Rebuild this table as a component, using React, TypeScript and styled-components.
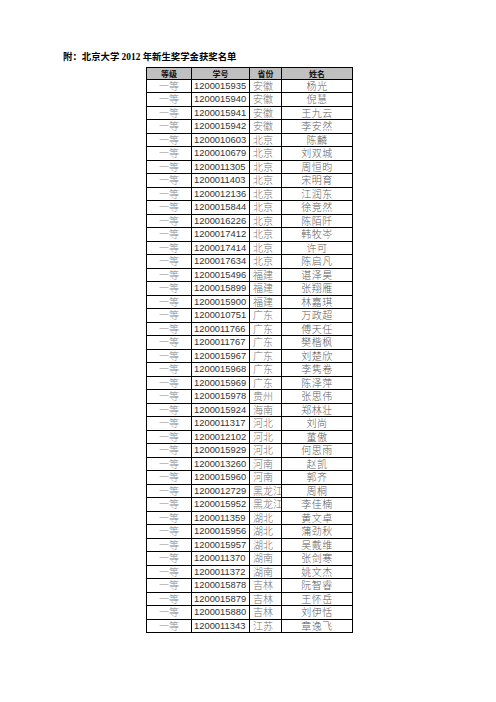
import React from "react";
import styled, { createGlobalStyle } from "styled-components";

const Global = createGlobalStyle`
  html, body { margin: 0; padding: 0; background: #fff; }
  body { font-family: "Liberation Serif", "Noto Sans CJK SC", serif; }
`;

const Page = styled.div`
  width: 496px;
  height: 702px;
  box-sizing: border-box;
  padding: 52px 0 0 63px;
  background: #fff;
`;

const Title = styled.div`
  font-family: "Liberation Serif", "Noto Sans CJK SC", serif;
  font-weight: 700;
  font-size: 9.4px;
  line-height: 11px;
  color: #000;
  height: 15px;
  white-space: nowrap;
`;

const Num = styled.span`
  font-family: "Liberation Serif", serif;
  font-weight: 700;
`;

const Table = styled.table`
  margin-left: 83px;
  border-collapse: collapse;
  table-layout: fixed;
  width: 202px;
`;

const HeadRow = styled.tr`
  height: 11.5px;
  background: #c0c0c0;
`;

const Row = styled.tr`
  height: 13.5px;
`;

const Th = styled.th<{ $w: number }>`
  width: ${(p) => p.$w}px;
  border: 1px solid #000;
  padding: 0;
  font-family: "Noto Sans CJK SC", sans-serif;
  font-weight: 700;
  font-size: 8px;
  line-height: 9px;
  color: #111;
  text-align: center;
  vertical-align: middle;
`;

const Td = styled.td<{ $kind: "grade" | "id" | "prov" | "name" }>`
  border: 1px solid #000;
  padding: ${(p) => (p.$kind === "id" ? "0 0 0 2px" : p.$kind === "prov" ? "0 0 0 3px" : "0")};
  font-family: ${(p) =>
    p.$kind === "id" ? `"Liberation Sans", Arial, sans-serif` : `"Noto Sans CJK SC", sans-serif`};
  font-weight: ${(p) => (p.$kind === "id" ? 400 : 300)};
  font-size: ${(p) => (p.$kind === "id" ? "9.4px" : "10px")};
  line-height: 12px;
  color: ${(p) =>
    p.$kind === "grade" ? "#8c8c8c" : p.$kind === "id" ? "#333" : p.$kind === "prov" ? "#707070" : "#5c5c5c"};
  text-align: ${(p) => (p.$kind === "grade" || p.$kind === "name" ? "center" : "left")};
  vertical-align: middle;
  white-space: nowrap;
  overflow: hidden;
  letter-spacing: ${(p) => (p.$kind === "name" ? "0.5px" : "0")};
`;

const data: [string, string, string][] = [
  ["1200015935", "安徽", "杨光"],
  ["1200015940", "安徽", "倪慧"],
  ["1200015941", "安徽", "王九云"],
  ["1200015942", "安徽", "李安然"],
  ["1200010603", "北京", "陈麟"],
  ["1200010679", "北京", "刘双城"],
  ["1200011305", "北京", "周恒昀"],
  ["1200011403", "北京", "宋明育"],
  ["1200012136", "北京", "江润东"],
  ["1200015844", "北京", "徐竞然"],
  ["1200016226", "北京", "陈陌阡"],
  ["1200017412", "北京", "韩牧岑"],
  ["1200017414", "北京", "许可"],
  ["1200017634", "北京", "陈启凡"],
  ["1200015496", "福建", "谌泽昊"],
  ["1200015899", "福建", "张翔雁"],
  ["1200015900", "福建", "林嘉琪"],
  ["1200010751", "广东", "万政超"],
  ["1200011766", "广东", "傅天任"],
  ["1200011767", "广东", "樊楷枫"],
  ["1200015967", "广东", "刘楚欣"],
  ["1200015968", "广东", "李隽卷"],
  ["1200015969", "广东", "陈泽萍"],
  ["1200015978", "贵州", "张思伟"],
  ["1200015924", "海南", "郑林壮"],
  ["1200011317", "河北", "刘尚"],
  ["1200012102", "河北", "董傲"],
  ["1200015929", "河北", "何思雨"],
  ["1200013260", "河南", "赵凯"],
  ["1200015960", "河南", "郭齐"],
  ["1200012729", "黑龙江", "周桐"],
  ["1200015952", "黑龙江", "李佳楠"],
  ["1200011359", "湖北", "黄文卓"],
  ["1200015956", "湖北", "蒲劲秋"],
  ["1200015957", "湖北", "吴戴维"],
  ["1200011370", "湖南", "张剑寒"],
  ["1200011372", "湖南", "姚文杰"],
  ["1200015878", "吉林", "阮智睿"],
  ["1200015879", "吉林", "王怀岳"],
  ["1200015880", "吉林", "刘伊恬"],
  ["1200011343", "江苏", "章逸飞"],
];

export default function App() {
  return (
    <Page>
      <Global />
      <Title>
        附：北京大学 <Num>2012</Num> 年新生奖学金获奖名单
      </Title>
      <Table>
        <thead>
          <HeadRow>
            <Th $w={44}>等级</Th>
            <Th $w={57}>学号</Th>
            <Th $w={31}>省份</Th>
            <Th $w={70}>姓名</Th>
          </HeadRow>
        </thead>
        <tbody>
          {data.map(([id, prov, name]) => (
            <Row key={id}>
              <Td $kind="grade">一等</Td>
              <Td $kind="id">{id}</Td>
              <Td $kind="prov">{prov}</Td>
              <Td $kind="name">{name}</Td>
            </Row>
          ))}
        </tbody>
      </Table>
    </Page>
  );
}
